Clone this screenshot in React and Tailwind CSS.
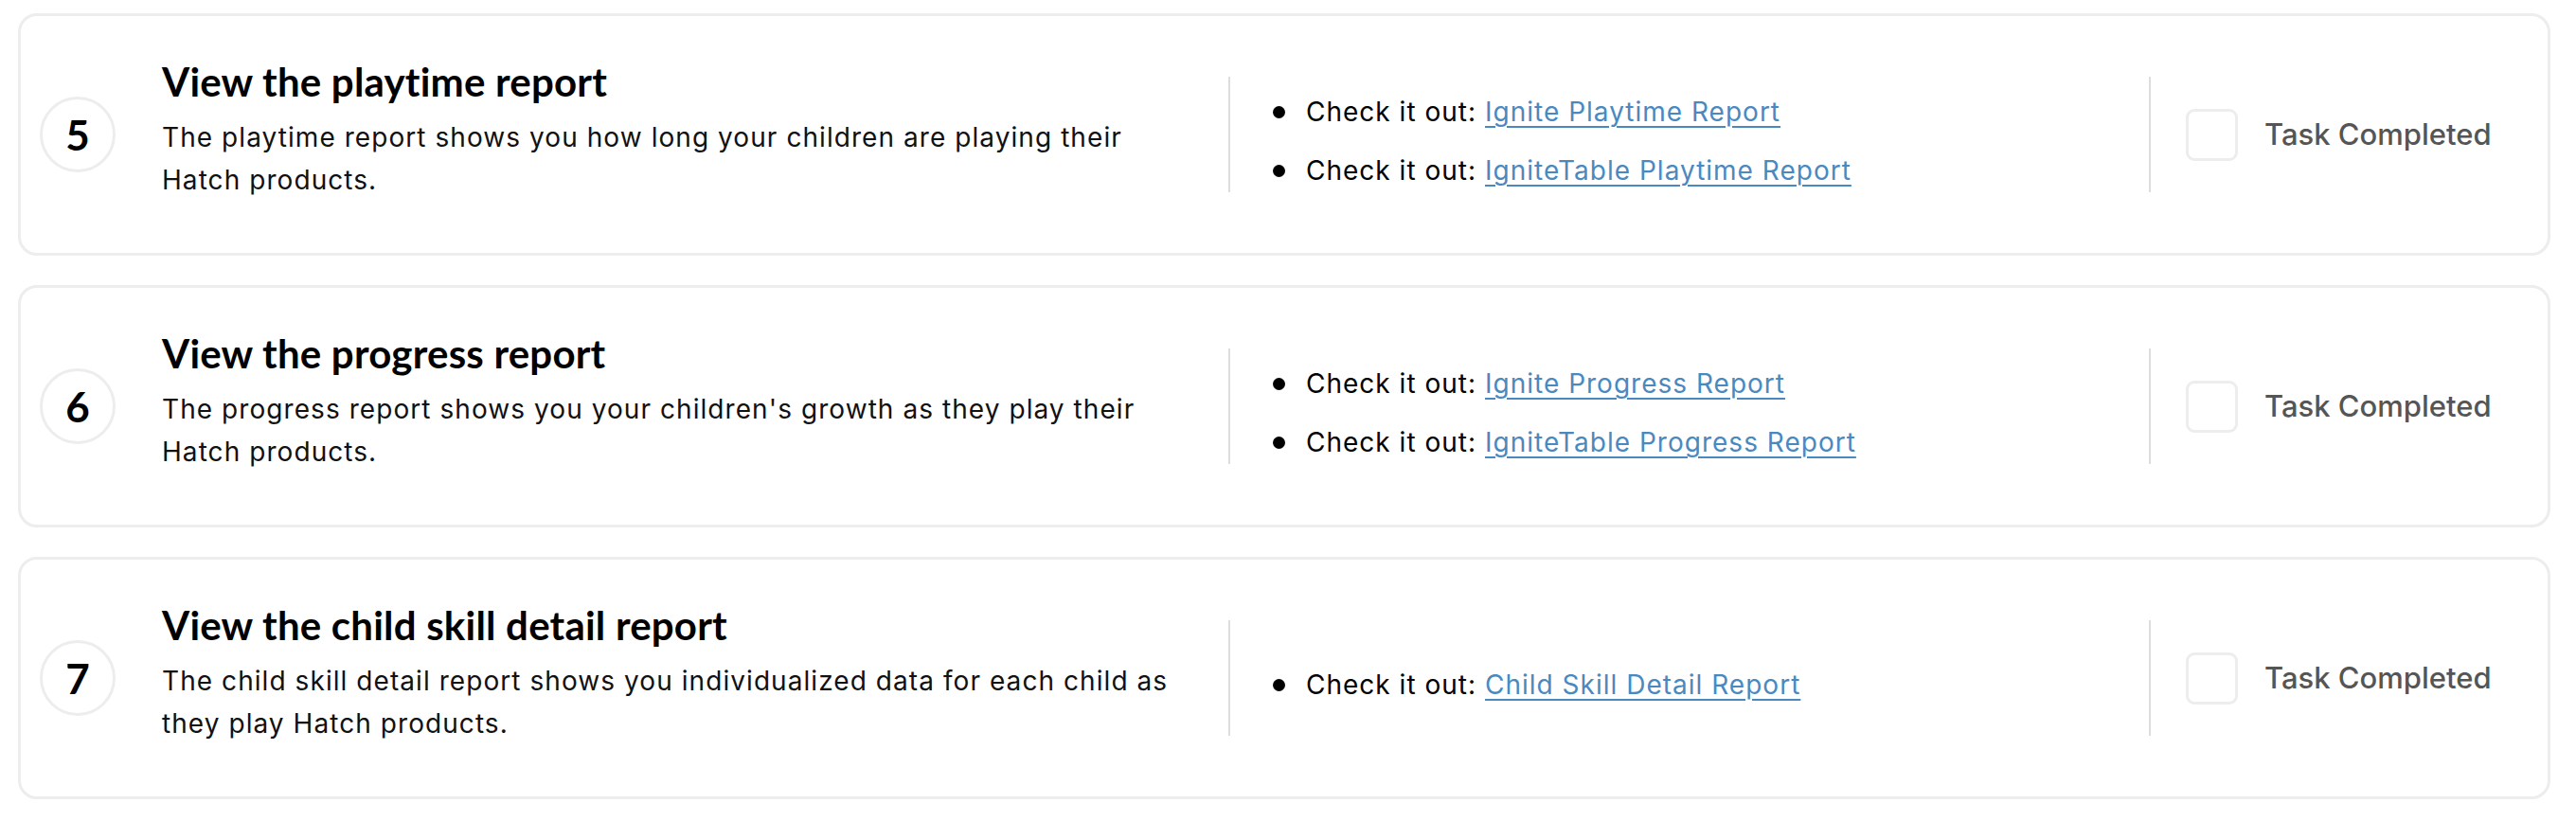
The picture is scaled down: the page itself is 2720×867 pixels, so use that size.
import React from "react";

const tasks = [
  {
    n: "5",
    title: "View the playtime report",
    desc: ["The playtime report shows you how long your children are playing their", "Hatch products."],
    links: ["Ignite Playtime Report", "IgniteTable Playtime Report"],
  },
  {
    n: "6",
    title: "View the progress report",
    desc: ["The progress report shows you your children's growth as they play their", "Hatch products."],
    links: ["Ignite Progress Report", "IgniteTable Progress Report"],
  },
  {
    n: "7",
    title: "View the child skill detail report",
    desc: ["The child skill detail report shows you individualized data for each child as", "they play Hatch products."],
    links: ["Child Skill Detail Report"],
  },
];

function TaskCard({ t }) {
  return (
    <div className="flex h-[256px] items-center rounded-[20px] border-[3px] border-[#ededed] bg-white pl-[20px]">
      <div className="flex h-[80px] w-[80px] shrink-0 items-center justify-center rounded-full border-[3px] border-[#ededed]">
        <span className="font-['Lato',sans-serif] text-[44px] font-bold leading-none text-black">{t.n}</span>
      </div>
      <div className="ml-[49px] w-[1126px] shrink-0 pb-[10px] pr-[40px]">
        <h2 className="font-['Lato',sans-serif] text-[42px] font-bold leading-[50px] tracking-[0.005em] text-black">{t.title}</h2>
        <p className="mt-[12px] font-['Inter',sans-serif] text-[28px] leading-[45px] tracking-[0.038em] text-[#111]">
          {t.desc.map((l, i) => (
            <span key={i} className="block whitespace-nowrap">{l}</span>
          ))}
        </p>
      </div>
      <div className="flex h-[122px] w-[972px] shrink-0 items-center border-l-2 border-[#dddddd] pl-[45px]">
        <ul className="flex flex-col gap-[22px] pt-[14px]">
          {t.links.map((l, i) => (
            <li key={i} className="flex items-center font-['Inter',sans-serif] text-[28px] leading-[40px] tracking-[0.036em] text-black">
              <span className="mr-[22px] h-[13px] w-[13px] rounded-full bg-black" />
              <span>
                Check it out:{" "}
                <a href="#" className="text-[#4a89c0] underline decoration-2 underline-offset-[5px]">{l}</a>
              </span>
            </li>
          ))}
        </ul>
      </div>
      <div className="flex h-[122px] flex-1 items-center border-l-2 border-[#dddddd] pl-[37px]">
        <div className="h-[55px] w-[55px] rounded-[9px] border-[3px] border-[#ededed]" />
        <span className="ml-[28px] font-['Inter',sans-serif] text-[31px] font-medium text-[#555]">Task Completed</span>
      </div>
    </div>
  );
}

export default function App() {
  return (
    <div className="min-h-[867px] bg-white pl-[19px] pr-[27px] pt-[14px]">
      <div className="flex flex-col gap-[31px]">
        {tasks.map((t) => (
          <TaskCard key={t.n} t={t} />
        ))}
      </div>
    </div>
  );
}
